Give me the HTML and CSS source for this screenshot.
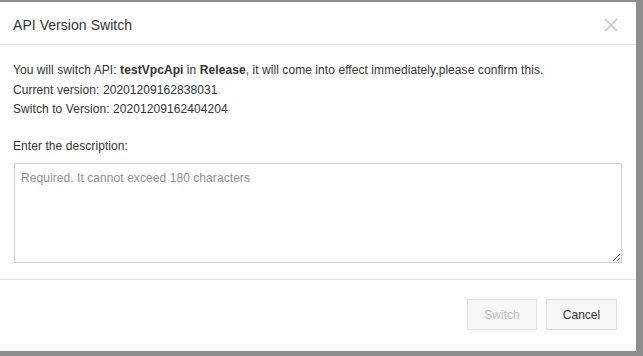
FILE: index.html
```html
<!DOCTYPE html>
<html>
<head>
<meta charset="utf-8">
<link rel="stylesheet" href="styles.css">
</head>
<body>
<div class="dialog">
  <div class="dialog-header">
    <span class="dialog-title">API Version Switch</span>
    <span class="dialog-close">
      <svg width="14" height="14" viewBox="0 0 14 14"><path d="M1 1 L13 13 M13 1 L1 13" stroke="#c2c2c2" stroke-width="1.4" fill="none"/></svg>
    </span>
  </div>
  <div class="dialog-body">
    <p class="line">You will switch API: <b>testVpcApi</b> in <b>Release</b>, it will come into effect immediately,please confirm this.</p>
    <p class="line">Current version: 20201209162838031</p>
    <p class="line">Switch to Version: 20201209162404204</p>
    <p class="label">Enter the description:</p>
    <textarea class="desc" placeholder="Required. It cannot exceed 180 characters"></textarea>
  </div>
  <div class="dialog-footer">
    <button class="btn btn-disabled" disabled>Switch</button>
    <button class="btn btn-cancel">Cancel</button>
  </div>
</div>
</body>
</html>
```
FILE: styles.css
```css
html, body {
  margin: 0;
  padding: 0;
}
body {
  background: #8c8c8c;
  width: 643px;
  height: 356px;
  overflow: hidden;
  font-family: "Liberation Sans", Arial, sans-serif;
  color: #333;
}
.dialog {
  margin-top: 2px;
  width: 636px;
  height: 349px;
  background: #fff;
  display: flex;
  flex-direction: column;
}
.dialog-header {
  height: 43px;
  box-sizing: border-box;
  border-bottom: 1px solid #e5e5e5;
  display: flex;
  align-items: center;
  justify-content: space-between;
  padding: 3px 18px 0 13px;
}
.dialog-title {
  font-size: 14px;
  color: #333;
  letter-spacing: 0.05px;
}
.dialog-close {
  display: flex;
  width: 14px;
  height: 14px;
}
.dialog-body {
  padding: 16px 14px 16px 13px;
  border-bottom: 1px solid #e5e5e5;
  font-size: 12px;
  letter-spacing: 0.07px;
}
.line {
  margin: 0;
  line-height: 19.5px;
}
.label {
  margin: 17px 0 0;
  line-height: 19.5px;
}
.desc {
  display: block;
  box-sizing: border-box;
  margin: 7px 0 0 1px;
  width: 608px;
  height: 100px;
  border: 1px solid #cfcfcf;
  border-radius: 0;
  padding: 7px 6px;
  font-family: "Liberation Sans", Arial, sans-serif;
  font-size: 12px;
  letter-spacing: 0.07px;
  color: #333;
  outline: none;
}
.desc::placeholder {
  color: #8f8f8f;
}
.dialog-footer {
  display: flex;
  justify-content: flex-end;
  gap: 9px;
  padding: 19px 19px 0 0;
}
.btn {
  width: 70px;
  height: 31px;
  box-sizing: border-box;
  background: #f7f7f7;
  border: 1px solid #dcdcdc;
  font-family: "Liberation Sans", Arial, sans-serif;
  font-size: 12px;
  color: #333;
  padding: 0;
  border-radius: 0;
}
.btn-cancel {
  width: 71px;
}
.btn-disabled {
  color: #bcbcbc;
  border-color: #e3e3e3;
}
```
